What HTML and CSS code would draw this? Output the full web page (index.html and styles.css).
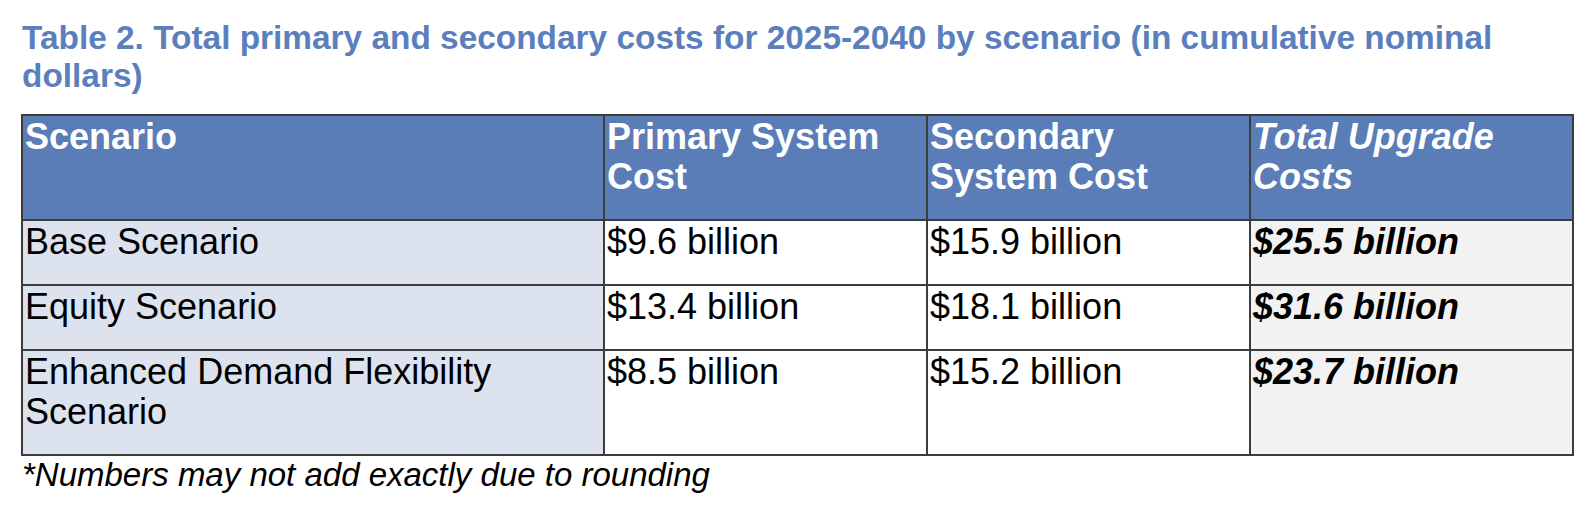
FILE: index.html
```html
<!DOCTYPE html>
<html lang="en">
<head>
<meta charset="utf-8">
<title>Table 2</title>
<link rel="stylesheet" href="styles.css">
</head>
<body>
<div class="page">
  <h2 class="caption">Table 2. Total primary and secondary costs for 2025-2040 by scenario (in cumulative nominal dollars)</h2>
  <table class="costs">
    <colgroup>
      <col class="c-scenario">
      <col class="c-num">
      <col class="c-num">
      <col class="c-num">
    </colgroup>
    <thead>
      <tr>
        <th>Scenario</th>
        <th>Primary System Cost</th>
        <th>Secondary System Cost</th>
        <th class="total">Total Upgrade Costs</th>
      </tr>
    </thead>
    <tbody>
      <tr>
        <td class="name">Base Scenario</td>
        <td>$9.6 billion</td>
        <td>$15.9 billion</td>
        <td class="total">$25.5 billion</td>
      </tr>
      <tr>
        <td class="name">Equity Scenario</td>
        <td>$13.4 billion</td>
        <td>$18.1 billion</td>
        <td class="total">$31.6 billion</td>
      </tr>
      <tr>
        <td class="name">Enhanced Demand Flexibility Scenario</td>
        <td>$8.5 billion</td>
        <td>$15.2 billion</td>
        <td class="total">$23.7 billion</td>
      </tr>
    </tbody>
  </table>
  <p class="note">*Numbers may not add exactly due to rounding</p>
</div>
</body>
</html>
```
FILE: styles.css
```css
html, body {
  margin: 0;
  padding: 0;
  background: #ffffff;
}
body {
  font-family: "Liberation Sans", Arial, Helvetica, sans-serif;
  color: #000000;
}
.page {
  padding: 19px 21px 0 21px;
}
.caption {
  margin: 0 0 19px 1px;
  font-size: 33.4px;
  line-height: 38px;
  font-weight: bold;
  color: #5b7fbc;
  width: 1540px;
}
.costs {
  border-collapse: collapse;
  table-layout: fixed;
  width: 1553px;
}
.c-scenario { width: 582px; }
.c-num { width: 323px; }
.costs th,
.costs td {
  border: 2px solid #3c3c3c;
  padding: 1px 2px 22px 2px;
  vertical-align: top;
  text-align: left;
  font-size: 36px;
  line-height: 40px;
}
.costs th {
  background: #5a7db8;
  color: #ffffff;
  font-weight: bold;
}
.costs th.total {
  font-style: italic;
}
.costs td {
  background: #ffffff;
  font-weight: normal;
}
.costs td.name {
  background: #dce3ef;
}
.costs td.total {
  background: #f2f2f2;
  font-weight: bold;
  font-style: italic;
}
.note {
  margin: 0 0 0 1px;
  font-size: 33px;
  line-height: 38px;
  font-style: italic;
}
```
